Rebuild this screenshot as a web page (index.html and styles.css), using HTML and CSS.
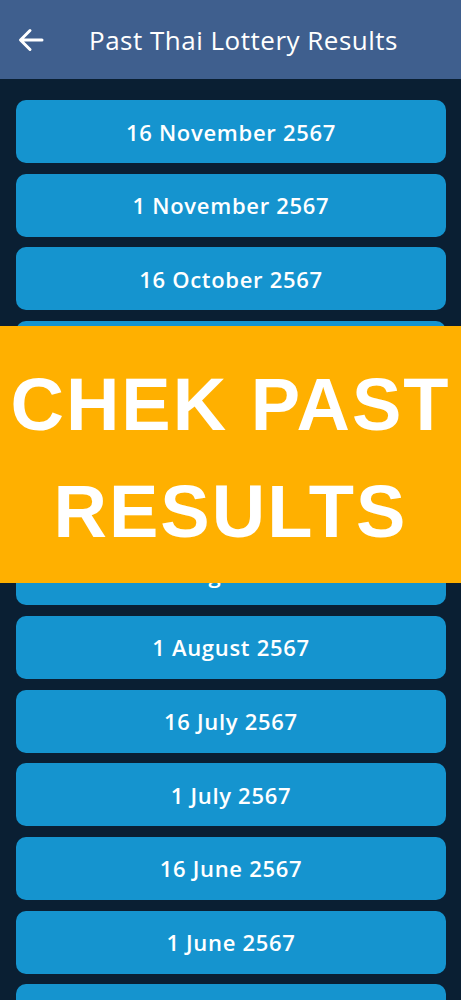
FILE: index.html
```html
<!DOCTYPE html>
<html>
<head>
<meta charset="utf-8">
<link rel="stylesheet" href="styles.css">
</head>
<body>
<header class="appbar">
  <svg class="back" width="26" height="24" viewBox="0 0 26 24" fill="none" stroke="#fff" stroke-width="3" stroke-linecap="round" stroke-linejoin="round">
    <path d="M24 12H3M12 2.5L2.5 12L12 21.5"/>
  </svg>
  <h1 class="title">Past Thai Lottery Results</h1>
</header>
<main class="list">
  <div class="item">16 November 2567</div>
  <div class="item">1 November 2567</div>
  <div class="item">16 October 2567</div>
  <div class="item">1 October 2567</div>
  <div class="item">16 September 2567</div>
  <div class="item">1 September 2567</div>
  <div class="item">16 August 2567</div>
  <div class="item">1 August 2567</div>
  <div class="item">16 July 2567</div>
  <div class="item">1 July 2567</div>
  <div class="item">16 June 2567</div>
  <div class="item">1 June 2567</div>
  <div class="item">16 May 2567</div>
</main>
<div class="banner">CHEK PAST<br>RESULTS</div>
</body>
</html>
```
FILE: styles.css
```css
html, body {
  margin: 0;
  padding: 0;
}
body {
  width: 461px;
  height: 1000px;
  overflow: hidden;
  background: #0a1f33;
  position: relative;
  font-family: "Open Sans", sans-serif;
}
.appbar {
  height: 79px;
  background: #3f5f8e;
  display: flex;
  align-items: center;
  box-sizing: border-box;
  padding-left: 18px;
}
.back {
  display: block;
}
.title {
  margin: 0 0 0 45px;
  color: #fff;
  font-size: 26px;
  font-weight: 400;
  letter-spacing: 0.5px;
}
.list {
  display: flex;
  flex-direction: column;
  gap: 10.7px;
  padding: 21px 15px 0 16px;
}
.item {
  height: 63px;
  flex-shrink: 0;
  border-radius: 10px;
  background: #1594cf;
  color: #fff;
  display: flex;
  align-items: center;
  justify-content: center;
  font-size: 22px;
  font-weight: 600;
  letter-spacing: 0.7px;
}
.banner {
  position: absolute;
  left: 0;
  top: 326px;
  width: 461px;
  height: 257px;
  box-sizing: border-box;
  padding-top: 6px;
  background: #ffb000;
  color: #fff;
  font-family: "Liberation Sans", Arial, sans-serif;
  font-weight: 700;
  font-size: 74px;
  letter-spacing: 2px;
  line-height: 107px;
  text-align: center;
  display: flex;
  align-items: center;
  justify-content: center;
}
```
